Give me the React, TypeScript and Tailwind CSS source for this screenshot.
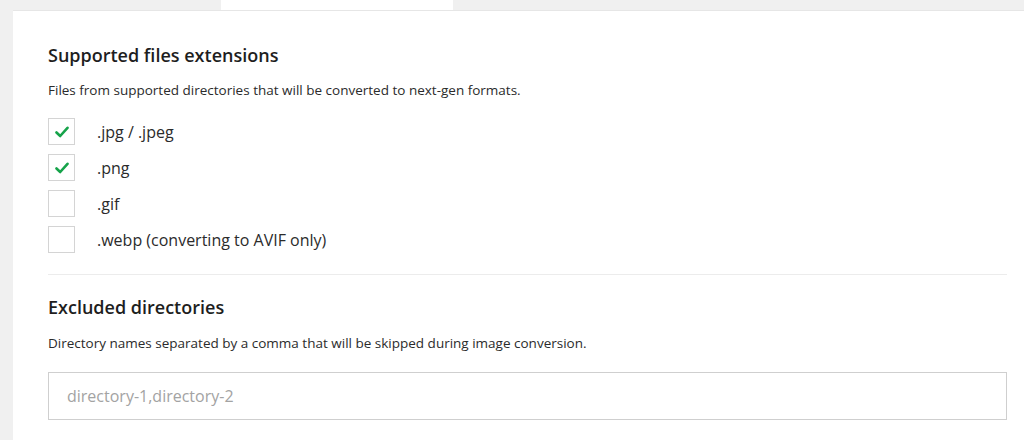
import React from 'react';

const font = { fontFamily: '"Open Sans", "Noto Sans", sans-serif' };

const options = [
    { label: '.jpg / .jpeg', checked: true },
    { label: '.png', checked: true },
    { label: '.gif', checked: false },
    { label: '.webp (converting to AVIF only)', checked: false },
];

const Checkbox = ({ checked }: { checked: boolean }) => (
    <span className="flex h-[27px] w-[27px] shrink-0 items-center justify-center border border-[#d4d4d4] bg-white">
        {checked && (
            <svg width="14" height="12" viewBox="0 0 14 12" fill="none">
                <path d="M1.5 6.5 L5.2 10 L12.5 1.8" stroke="#16a34a" strokeWidth="2.6" strokeLinecap="round" strokeLinejoin="round" />
            </svg>
        )}
    </span>
);

export default function App() {
    return (
        <div className="flex h-[440px] w-[1024px] flex-col overflow-hidden bg-[#f0f0f0]" style={font}>
            {/* tabs strip */}
            <div className="flex h-[10px] shrink-0">
                <div className="w-[221px]" />
                <div className="w-[232px] bg-white" />
            </div>
            <div className="ml-[13px] flex-1 border-t border-[#e6e6e6] bg-white pl-[35px] pr-[17px] pt-[33px]">
                <h2 className="text-[18px] font-semibold leading-[22px] text-[#1e1e1e]">Supported files extensions</h2>
                <p className="mt-[15px] text-[13.5px] leading-[18px] text-[#2b2b2b]">
                    Files from supported directories that will be converted to next-gen formats.
                </p>
                <div className="mt-[19px] flex flex-col gap-[9px]">
                    {options.map((o) => (
                        <label key={o.label} className="flex items-center gap-[22px]">
                            <Checkbox checked={o.checked} />
                            <span className="text-[16px] leading-[20px] text-[#2b2b2b]">{o.label}</span>
                        </label>
                    ))}
                </div>
                <div className="mt-[21px] border-t border-[#ececec]" />
                <h2 className="mt-[21px] text-[18px] font-semibold leading-[22px] text-[#1e1e1e]">Excluded directories</h2>
                <p className="mt-[16px] text-[13.5px] leading-[18px] text-[#2b2b2b]">
                    Directory names separated by a comma that will be skipped during image conversion.
                </p>
                <input
                    className="mt-[20px] block h-[48px] w-full border border-[#cfcfcf] bg-white px-[18px] text-[16px] text-[#2b2b2b] outline-none placeholder:text-[#a3a3a3]"
                    placeholder="directory-1,directory-2"
                    style={font}
                />
            </div>
        </div>
    );
}
